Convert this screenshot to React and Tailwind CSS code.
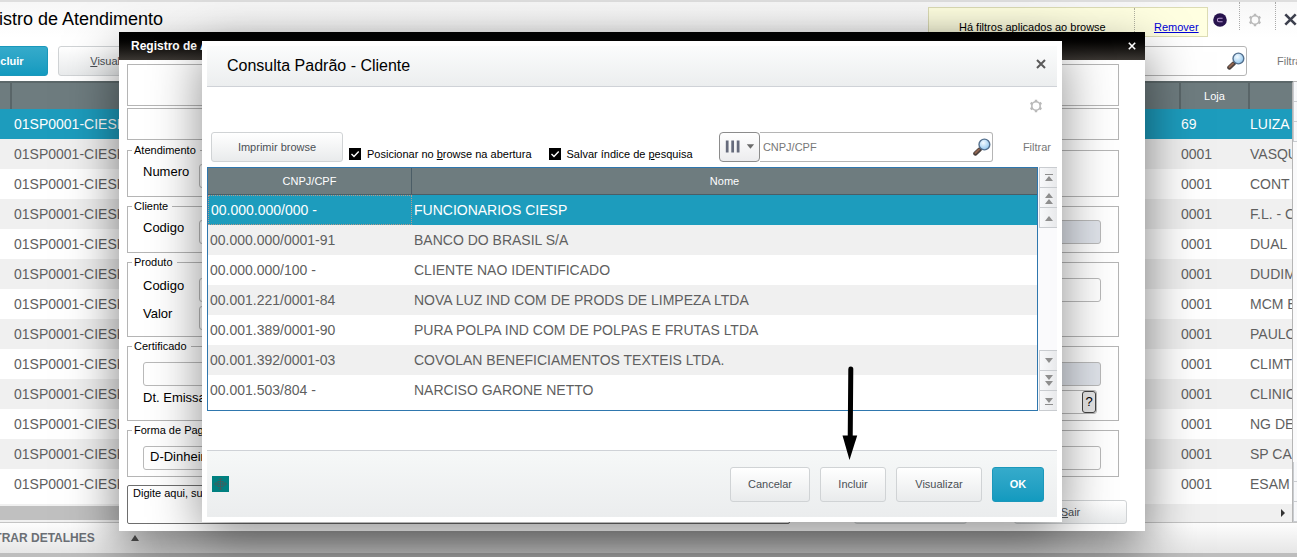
import React from "react";

const clientes = [
  ["00.000.000/000 -", "FUNCIONARIOS CIESP"],
  ["00.000.000/0001-91", "BANCO DO BRASIL S/A"],
  ["00.000.000/100 -", "CLIENTE NAO IDENTIFICADO"],
  ["00.001.221/0001-84", "NOVA LUZ IND COM DE PRODS DE LIMPEZA LTDA"],
  ["00.001.389/0001-90", "PURA POLPA IND COM DE POLPAS E FRUTAS LTDA"],
  ["00.001.392/0001-03", "COVOLAN BENEFICIAMENTOS TEXTEIS LTDA."],
  ["00.001.503/804 -", "NARCISO GARONE NETTO"],
];

const atendimentos = [
  ["69", "LUIZA"],
  ["0001", "VASQU"],
  ["0001", "CONT"],
  ["0001", "F.L. - C"],
  ["0001", "DUAL"],
  ["0001", "DUDIM"],
  ["0001", "MCM E"],
  ["0001", "PAULO"],
  ["0001", "CLIMT"],
  ["0001", "CLINIC"],
  ["0001", "NG DE"],
  ["0001", "SP CA"],
  ["0001", "ESAM"],
];

const plainButton =
  "rounded-[3px] border border-[#d0d3d5] bg-linear-to-b from-white to-[#e9ebec] text-[11px] text-[#4b5055]";
const primaryButton =
  "rounded-[3px] border border-[#1b98bb] bg-linear-to-b from-[#35abcb] to-[#129abf] text-[11px] font-bold text-white";
const field = "h-6 rounded-[3px] border border-[#b9b9b9] px-1.5 text-[13px]";

function Gear({ className }) {
  return (
    <svg viewBox="0 0 14 14" className={className} fill="none" stroke="#b9b9b9" aria-hidden="true">
      <circle cx="7" cy="7" r="4.2" strokeWidth="1.6" />
      <path
        d="M7 0.8 V3 M7 11 V13.2 M1.6 3.9 L3.5 5 M10.5 9 L12.4 10.1 M1.6 10.1 L3.5 9 M10.5 5 L12.4 3.9"
        strokeWidth="2.4"
      />
    </svg>
  );
}

function Magnifier() {
  return (
    <svg viewBox="0 0 18 18" className="size-[18px] shrink-0" aria-hidden="true">
      <defs>
        <radialGradient id="lens" cx="0.4" cy="0.35" r="0.7">
          <stop offset="0" stopColor="#f4fbff" />
          <stop offset="1" stopColor="#8cc4ee" />
        </radialGradient>
      </defs>
      <path d="M2.3 15.6 L6.8 11.4" stroke="#4a403c" strokeWidth="4.2" strokeLinecap="round" />
      <path d="M2.4 14.9 L6 11.5" stroke="#8f6450" strokeWidth="2" strokeLinecap="round" />
      <circle cx="11.4" cy="6.5" r="5.4" fill="url(#lens)" stroke="#55718f" strokeWidth="1.4" />
    </svg>
  );
}

function Cross({ className, color, width }) {
  return (
    <svg viewBox="0 0 10 10" className={className} aria-hidden="true">
      <path d="M1 1 L9 9 M9 1 L1 9" stroke={color} strokeWidth={width} />
    </svg>
  );
}

function ScrollButton({ label, children }) {
  return (
    <button
      aria-label={label}
      className="flex h-5 w-full items-center justify-center border-b border-l border-[#c9ccd0] bg-linear-to-r from-[#f8f9fb] to-[#e8e9eb]"
    >
      <svg viewBox="0 0 10 12" className="h-3 w-2.5" fill="#8e8e8e" aria-hidden="true">
        {children}
      </svg>
    </button>
  );
}

function Group({ title, className, children }) {
  return (
    <fieldset className={`border border-[#b5b5b5] ${className}`}>
      <legend className="ml-1 pr-1 pl-0.5 text-[11px] leading-4">{title}</legend>
      <div className="flex flex-col gap-1 pr-[17px] pl-[15px]">{children}</div>
    </fieldset>
  );
}

function Row({ label, id, children }) {
  return (
    <div className="flex h-6 items-start">
      {label && (
        <label htmlFor={id} className="w-14 shrink-0 text-[13px] leading-4 whitespace-nowrap">
          {label}
        </label>
      )}
      {children}
    </div>
  );
}

function Check({ id, children }) {
  return (
    <div className="flex items-center gap-1.5">
      <span className="relative size-3">
        <input id={id} type="checkbox" defaultChecked className="block size-3 appearance-none bg-black" />
        <svg viewBox="0 0 12 12" className="pointer-events-none absolute inset-0" fill="none" aria-hidden="true">
          <path d="M2.5 6 L5 8.5 L9.7 3.6" stroke="white" strokeWidth="1.4" />
        </svg>
      </span>
      <label htmlFor={id} className="text-[11px] leading-3 whitespace-nowrap">
        {children}
      </label>
    </div>
  );
}

function BrowsePage() {
  return (
    <main className="-mr-[14px] -ml-[34px] border-t-2 border-[#dedede] bg-white">
      <header className="flex h-9 items-start justify-between bg-linear-to-b from-[#f7f7f7] to-white pr-[14px]">
        <h1 className="pt-[5px] text-[18px] leading-6 whitespace-nowrap">Registro de Atendimento</h1>
        <div className="flex items-start">
          <div className="mt-[5px] flex h-[30px] items-end border border-[#dcdcb4] bg-[#ffffe1] text-[11px]">
            <p className="w-[205px] pb-px pl-[30px] leading-4 whitespace-nowrap">Há filtros aplicados ao browse</p>
            <div className="h-full border-l border-dotted border-[#b0b0a0]" />
            <a href="#remover" className="w-[72px] pb-px pl-[19px] leading-4 text-[#0000d8] underline">
              Remover
            </a>
          </div>
          <svg viewBox="0 0 14 14" className="mt-[11px] ml-[5px] size-3.5" aria-hidden="true">
            <circle cx="7" cy="7" r="6.8" fill="#27134d" />
            <path d="M9.6 5.2 H6 Q4.4 5.2 4.4 7 Q4.4 8.8 6 8.8 H9.6" fill="none" stroke="#b89ad0" strokeWidth="1.1" />
          </svg>
          <div className="ml-3 h-7 border-l border-dotted border-[#aaaaaa]" />
          <button aria-label="Configurar" className="mt-[11px] ml-2">
            <Gear className="size-3.5" />
          </button>
          <div className="ml-[13px] h-7 border-l border-dotted border-[#aaaaaa]" />
          <button aria-label="Fechar" className="mt-[11px] ml-2">
            <Cross className="size-[13px]" color="#3c3f4d" width="2" />
          </button>
        </div>
      </header>
      <div className="flex h-[43px] items-start justify-between pt-2">
        <div className="flex gap-2.5">
          <button className={`h-[30px] w-[82px] ${primaryButton}`}>Incluir</button>
          <button className={`h-[30px] w-[112px] ${plainButton}`}>
            <u>V</u>isualizar
          </button>
        </div>
        <div className="flex items-center">
          <div className="flex h-[30px] w-[270px] items-center rounded-[3px] border border-[#b5b5b5] bg-white pr-px">
            <input aria-label="Pesquisar atendimentos" className="min-w-0 flex-1" />
            <Magnifier />
          </div>
          <button className="ml-[30px] w-[34px] text-left text-[11px] text-[#777777]">Filtrar</button>
        </div>
      </div>
      <div className="flex border-b border-[#c4c4c4]">
        <div className="min-w-0 flex-1">
          <div className="border-t-2 border-r border-t-[#5c686a] border-r-[#b5b5b5] pb-[5px]">
            <table className="w-full table-fixed border-separate border-spacing-0">
              <thead>
                <tr className="h-[26px] bg-[#6e7c7f] text-[11px] text-white">
                  <th className="w-[46px] border-r-2 border-[#596568]"></th>
                  <th></th>
                  <th className="w-[69px] border-l-2 border-[#596568] font-normal">Loja</th>
                  <th className="w-[44px] border-l-2 border-[#596568]"></th>
                </tr>
              </thead>
              <tbody>
                {atendimentos.map(([loja, nome], i) => (
                  <tr
                    key={i}
                    className={`h-[30px] text-[14px] ${
                      i === 0 ? "bg-[#1d9cbd] text-white" : i % 2 ? "bg-[#f0f0f0] text-[#5f5f5f]" : "bg-white text-[#5f5f5f]"
                    }`}
                  >
                    <td></td>
                    <td className="overflow-hidden pl-0.5 whitespace-nowrap">01SP0001-CIESP</td>
                    <td className="pl-0.5">{loja}</td>
                    <td className="overflow-hidden pl-0.5 whitespace-nowrap">{nome}</td>
                  </tr>
                ))}
              </tbody>
            </table>
          </div>
          <div className="flex h-[18px] items-center justify-end border-r border-[#b5b5b5] bg-[#f0f0f0]">
            <div className="h-3.5 flex-1 bg-[#c0c0c0]" />
            <div className="flex w-1/5 justify-end pr-1.5">
              <svg viewBox="0 0 6 8" className="h-2 w-1.5" aria-hidden="true">
                <path d="M1 0 L5 4 L1 8 Z" fill="#333333" />
              </svg>
            </div>
          </div>
        </div>
        <div className="flex w-[18px] flex-col justify-between border-t border-[#b5b5b5] bg-[#fafafb]">
          <div>
            <ScrollButton label="Primeiro registro" />
            <ScrollButton label="Página anterior" />
            <ScrollButton label="Registro anterior" />
          </div>
          <div>
            <ScrollButton label="Próximo registro" />
            <ScrollButton label="Próxima página" />
            <ScrollButton label="Último registro" />
          </div>
        </div>
      </div>
      <footer className="flex h-[30px] items-center gap-9 bg-linear-to-b from-[#fdfdfd] to-[#e6e6e6] pl-px text-[12px] font-bold text-[#6b6f75]">
        MOSTRAR DETALHES
        <svg viewBox="0 0 8 6" className="h-1.5 w-2" aria-hidden="true">
          <path d="M0 6 L4 0 L8 6 Z" fill="#555555" />
        </svg>
      </footer>
      <div className="h-[5px] bg-[#bdbdbd]" />
    </main>
  );
}

function RegistroDialog() {
  return (
    <section
      role="dialog"
      aria-label="Registro de Atendimento"
      className="absolute top-8 right-[152px] left-[119px] bg-white pb-[7px] shadow-[0_20px_48px_rgba(0,0,0,0.5)]"
    >
      <header className="flex h-7 items-center justify-between bg-linear-to-b from-black to-[#3b3733] pr-[9px] pl-3 text-white">
        <h2 className="text-[12px] font-bold">Registro de Atendimento</h2>
        <button aria-label="Fechar registro">
          <Cross className="size-2" color="#ffffff" width="2" />
        </button>
      </header>
      <div className="flex flex-col pt-1 pr-[26px] pl-2">
        <div className="h-[42px] border border-[#b5b5b5]" />
        <div className="mt-0.5 h-8 border border-[#b5b5b5]" />
        <div className="mt-0.5 flex flex-col gap-px">
          <Group title="Atendimento" className="h-[55px] [&>div]:pt-1.5">
            <Row label="Numero" id="numero">
              <input id="numero" className={`w-40 ${field}`} />
            </Row>
          </Group>
          <Group title="Cliente" className="h-[55px] [&>div]:pt-1.5">
            <Row label="Codigo" id="cliente">
              <input id="cliente" className={`w-40 ${field}`} />
              <input aria-label="Nome do cliente" disabled className={`ml-auto w-1/2 bg-[#dfe3ea] ${field}`} />
            </Row>
          </Group>
          <Group title="Produto" className="h-[83px] [&>div]:pt-2">
            <Row label="Codigo" id="produto">
              <input id="produto" className={`w-40 ${field}`} />
              <input aria-label="Nome do produto" className={`ml-auto w-1/2 ${field}`} />
            </Row>
            <Row label="Valor" id="valor">
              <input id="valor" className={`w-40 ${field}`} />
            </Row>
          </Group>
          <Group title="Certificado" className="h-[83px] [&>div]:pt-2">
            <Row>
              <input aria-label="Certificado" className={`w-40 ${field}`} />
              <input aria-label="Nome do certificado" disabled className={`ml-auto w-1/2 bg-[#dfe3ea] ${field}`} />
            </Row>
            <Row label="Dt. Emissao" id="emissao">
              <input id="emissao" className={`ml-6 w-40 ${field}`} />
              <div className={`mr-1 ml-auto flex w-1/3 items-center justify-end ${field}`}>
                <input aria-label="Data" className="min-w-0 flex-1" />
                <button className="-mr-1.5 h-[22px] w-3.5 rounded-[3px] border border-[#444444] bg-[#e6e6e6] text-[13px] leading-4">
                  ?
                </button>
              </div>
            </Row>
          </Group>
          <Group title="Forma de Pagamento" className="h-[55px] [&>div]:pt-2">
            <Row>
              <select aria-label="Forma de pagamento" className={`w-40 appearance-none pb-1 ${field}`}>
                <option>D-Dinheiro</option>
              </select>
              <input aria-label="Condição" className={`ml-auto w-1/2 ${field}`} />
            </Row>
          </Group>
        </div>
      </div>
      <div className="flex items-end pt-2 pr-[18px] pl-2">
        <textarea
          aria-label="Observação"
          defaultValue="Digite aqui, sua observação"
          className="block h-[39px] w-[663px] resize-none rounded-[2px] border border-[#6e6e6e] px-[5px] text-[11px] leading-3.5"
        />
        <button className={`ml-auto h-6 w-[113px] ${plainButton}`}>Confirmar</button>
        <button className={`ml-[47px] h-6 w-[113px] ${plainButton}`}>
          <u>S</u>air
        </button>
      </div>
    </section>
  );
}

function ConsultaDialog() {
  return (
    <section
      role="dialog"
      aria-label="Consulta Padrão - Cliente"
      className="absolute top-[41px] right-[235px] left-[202px] bg-white p-[5px] shadow-[0_12px_48px_rgba(0,0,0,0.45)]"
    >
      <header className="flex h-[41px] items-center justify-between border-b border-[#cfd2d7] bg-linear-to-b from-[#fbfcfc] to-[#eceeef] pr-[11px] pl-5">
        <h2 className="text-[16px]">Consulta Padrão - Cliente</h2>
        <button aria-label="Fechar consulta" className="pb-1">
          <Cross className="size-2.5" color="#5a5a5a" width="2" />
        </button>
      </header>
      <div className="flex h-[45px] justify-end pt-3 pr-3.5">
        <button aria-label="Configurar consulta" className="h-3.5">
          <Gear className="size-3.5" />
        </button>
      </div>
      <div className="flex items-start pr-1.5 pl-1">
        <button className={`h-[30px] w-[132px] ${plainButton}`}>Imprimir browse</button>
        <div className="flex gap-[17px] pt-4 pl-1.5">
          <Check id="posicionar">
            Posicionar no <u>b</u>rowse na abertura
          </Check>
          <Check id="salvar">
            Salvar índice de <u>p</u>esquisa
          </Check>
        </div>
        <div className="ml-auto flex">
          <button
            aria-label="Escolher coluna"
            className="flex h-[30px] w-[41px] items-center justify-between rounded-[4px] border border-[#8c8c8c] bg-linear-to-b from-white to-[#ececee] px-1"
          >
            <svg viewBox="0 0 34 14" className="h-3.5 w-[34px]" aria-hidden="true">
              <path d="M2 0 H5 V13 H2 Z M8 0 H11 V13 H8 Z M14 0 H17 V13 H14 Z" fill="#666b7c" />
              <path d="M25 4 H33 L29 9 Z" fill="#6b6b6b" />
            </svg>
          </button>
          <div className="flex h-[30px] w-[233px] items-center rounded-r-[3px] border border-l-0 border-[#b5b5b5] bg-white pr-px pl-[3px]">
            <input
              aria-label="Pesquisar"
              placeholder="CNPJ/CPF"
              className="min-w-0 flex-1 text-[11px] placeholder:text-[#777777]"
            />
            <Magnifier />
          </div>
          <button className="ml-[30px] text-[11px] text-[#777777]">Filtrar</button>
        </div>
      </div>
      <div className="mt-[5px] flex">
        <div className="min-w-0 flex-1 border border-[#2f77ae] pb-[5px]">
          <table className="w-full table-fixed border-separate border-spacing-0">
            <thead>
              <tr className="h-[27px] bg-[#6e7c7f] text-[11px] text-white">
                <th className="w-[204px] border-r border-b border-[#4b5d66] font-normal">CNPJ/CPF</th>
                <th className="border-b border-[#4b5d66] font-normal">Nome</th>
              </tr>
            </thead>
            <tbody>
              {clientes.map(([doc, nome], i) => (
                <tr
                  key={doc}
                  className={`h-[30px] text-[14px] ${
                    i === 0 ? "bg-[#1d9cbd] text-white" : i % 2 ? "bg-[#f0f0f0] text-[#5f5f5f]" : "bg-white text-[#5f5f5f]"
                  }`}
                >
                  <td className={i === 0 ? "border border-dotted border-[#b59a8c] pl-0.5" : "pl-0.5"}>{doc}</td>
                  <td className="pl-0.5">{nome}</td>
                </tr>
              ))}
            </tbody>
          </table>
        </div>
        <div className="flex w-[19px] flex-col justify-between bg-[#fafafc] pl-px">
          <div className="border-t border-[#c9ccd0]">
            <ScrollButton label="Primeiro">
              <path d="M1 2 H9 V3 H1 Z M1 9 L5 4 L9 9 Z" />
            </ScrollButton>
            <ScrollButton label="Página acima">
              <path d="M1 6 L5 1 L9 6 Z M1 12 L5 7 L9 12 Z" />
            </ScrollButton>
            <ScrollButton label="Acima">
              <path d="M1 9 L5 4 L9 9 Z" />
            </ScrollButton>
          </div>
          <div className="border-t border-[#c9ccd0]">
            <ScrollButton label="Abaixo">
              <path d="M1 3 L5 8 L9 3 Z" />
            </ScrollButton>
            <ScrollButton label="Página abaixo">
              <path d="M1 0 L5 5 L9 0 Z M1 6 L5 11 L9 6 Z" />
            </ScrollButton>
            <ScrollButton label="Último">
              <path d="M1 3 L5 8 L9 3 Z M1 9 H9 V10 H1 Z" />
            </ScrollButton>
          </div>
        </div>
      </div>
      <footer className="mt-[39px] flex h-[67px] items-center justify-end gap-2.5 border-t border-[#cfd2d7] bg-linear-to-b from-[#f6f8f8] to-[#ebedee] pr-[13px] pl-[5px]">
        <svg viewBox="0 0 17 16" className="mr-auto h-4 w-[17px]" aria-hidden="true">
          <rect width="17" height="16" fill="#008080" />
          <path
            d="M8.5 2 V14 M2.5 8 H14.5 M6.5 4 L8.5 2 L10.5 4 M6.5 12 L8.5 14 L10.5 12 M4.5 6 L2.5 8 L4.5 10 M12.5 6 L14.5 8 L12.5 10"
            fill="none"
            stroke="#3f5f60"
          />
          <rect x="6" y="5.5" width="5" height="5" fill="none" stroke="#3f5f60" />
        </svg>
        <button className={`h-[35px] w-20 ${plainButton}`}>Cancelar</button>
        <button className={`h-[35px] w-[66px] ${plainButton}`}>Incluir</button>
        <button className={`h-[35px] w-[86px] ${plainButton}`}>Visualizar</button>
        <button className={`h-[35px] w-[52px] ${primaryButton}`}>OK</button>
      </footer>
      <svg viewBox="0 0 16 94" className="pointer-events-none absolute right-[204px] bottom-[62px] h-[94px] w-4" aria-hidden="true">
        <path d="M8.8 3 L8.2 74" stroke="black" strokeWidth="5" strokeLinecap="round" />
        <path d="M0.5 69.5 L15.2 69.5 L7.5 94 Z" fill="black" />
      </svg>
    </section>
  );
}

export default function App() {
  return (
    <div className="relative min-h-screen overflow-hidden bg-white font-['Liberation_Sans',Arial,sans-serif] text-black">
      <BrowsePage />
      <RegistroDialog />
      <ConsultaDialog />
    </div>
  );
}
